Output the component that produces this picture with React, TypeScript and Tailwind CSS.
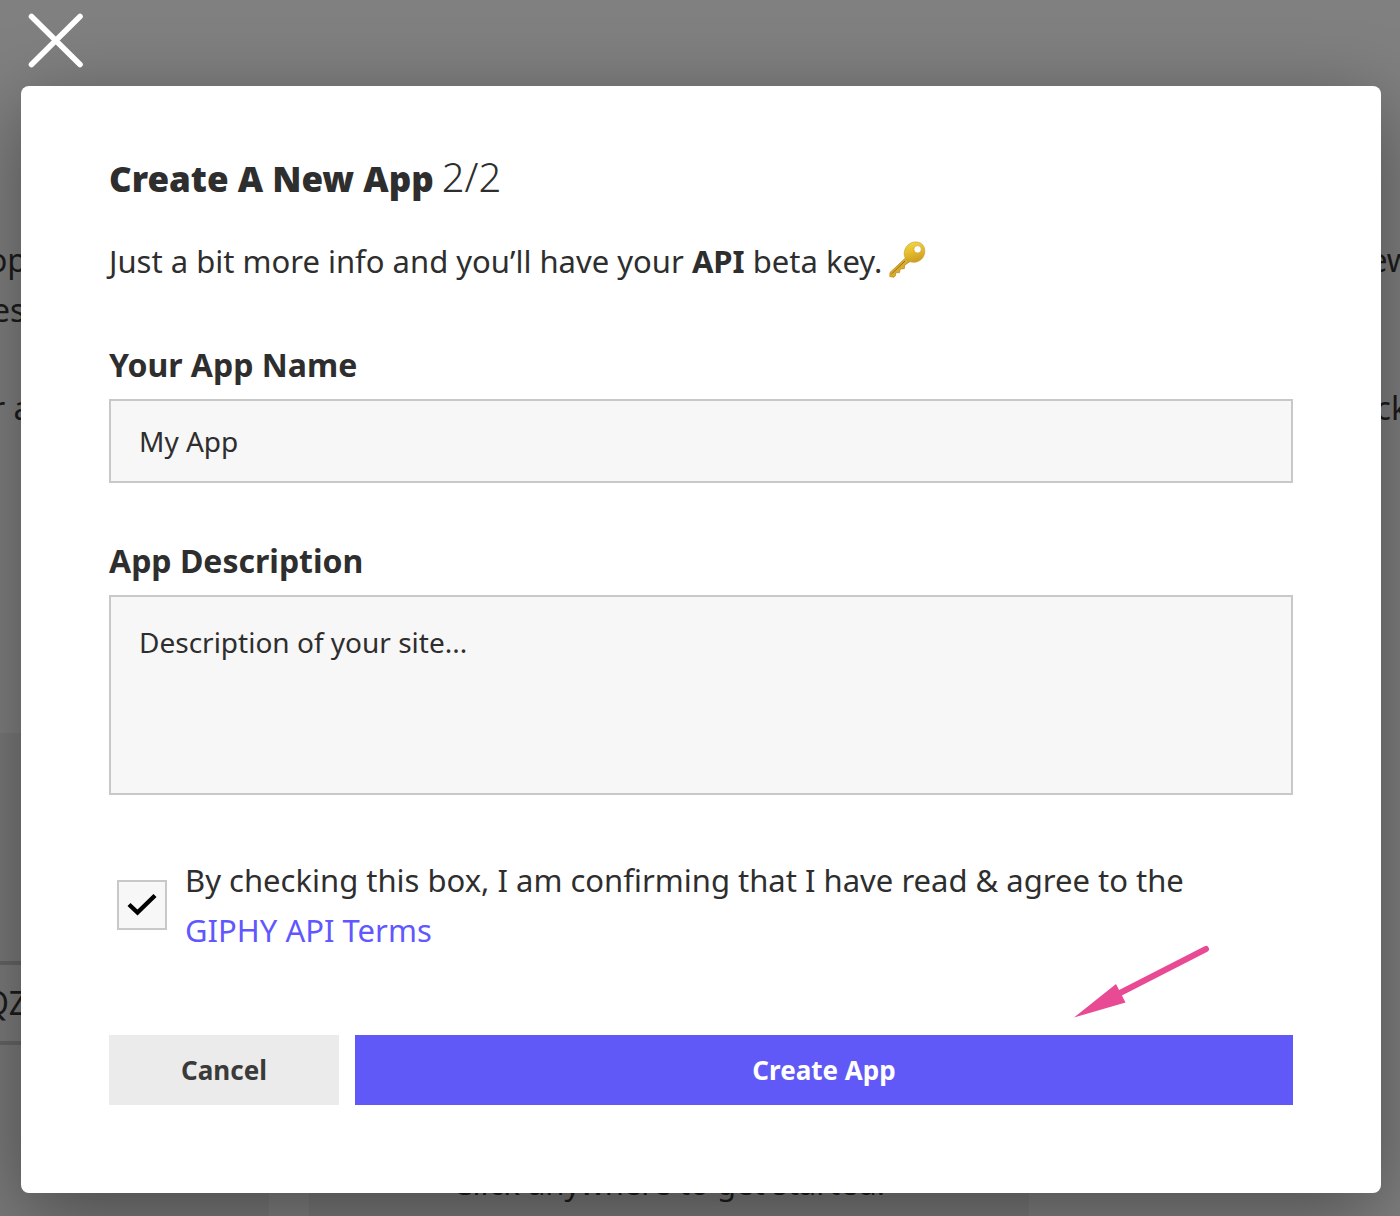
import React, { useState } from "react";

function CloseIcon() {
  return (
    <svg viewBox="0 0 56 56" className="h-14 w-14" fill="none" stroke="#ffffff" strokeWidth="5.600" strokeLinecap="round" aria-hidden="true">
      <path d="M3.500 4.500 52 52.500M52 4.500 3.500 52.500" />
    </svg>
  );
}

function KeyIcon() {
  return (
    <svg viewBox="0 0 38 38" className="mb-1 h-[38px] w-[38px] shrink-0" role="img" aria-label="key">
      <defs>
        <linearGradient id="keyGold" x1="0" y1="0" x2="0.3" y2="1">
          <stop offset="0" stopColor="#f4d94a" />
          <stop offset="0.5" stopColor="#e6c02f" />
          <stop offset="1" stopColor="#cfa023" />
        </linearGradient>
      </defs>
      <path d="M17.500 18 2 32.500 1.800 36.500 6 37.200 7.500 35.500 7.600 32.800 11.500 32.600 12.200 29 16.300 28.600 16.600 25.200 22 21.500Z" fill="#d9ad2e" stroke="#b98a1f" strokeWidth="0.8" />
      <path d="M17 21 3.500 34" stroke="#9a7018" strokeWidth="1" />
      <path fillRule="evenodd" d="M26.500 2C33 1.300 37 5.500 36.800 11.500 36.500 18.500 31 22.600 25 22.300 19 22 15.400 17.500 16.300 12 17.200 6.500 21.500 2.500 26.500 2ZM29.600 5.600A3.700 3.700 0 1 0 29.600 13 3.700 3.700 0 1 0 29.600 5.600Z" fill="url(#keyGold)" stroke="#c69a26" strokeWidth="0.6" />
    </svg>
  );
}

function Arrow() {
  return (
    <svg viewBox="0 0 136 74" className="pointer-events-none absolute right-0 bottom-full mr-[83px] mb-[17px] h-[74px] w-[136px]" aria-hidden="true">
      <path d="M132 5 46 49" stroke="#e94a94" strokeWidth="6" strokeLinecap="round" />
      <path d="M0 73.500 42 40 51.500 58.500Z" fill="#e94a94" />
    </svg>
  );
}

function PageBehind() {
  return (
    <div aria-hidden="true" className="absolute inset-0 flex flex-col overflow-hidden bg-[#808080] text-[32px] leading-[50px] text-[#1c1c1c]">
      <div className="-mx-3 mt-[235px] flex justify-between">
        <span>op</span>
        <span>new</span>
      </div>
      <div className="-ml-2">es</div>
      <div className="-mx-2 mt-12 flex justify-between">
        <span>r a</span>
        <span>ck</span>
      </div>
      <div className="mt-[300px] mr-10 h-[228px] shrink-0 bg-[#7a7a7a]" />
      <div className="mr-10 flex h-[84px] shrink-0 items-center border-y-4 border-[#666666] bg-[#7c7c7c]">
        <span className="-ml-4">QZ</span>
      </div>
      <div className="flex grow gap-10">
        <div className="w-[269px] bg-[#7a7a7a]" />
        <div className="flex w-[720px] justify-center overflow-hidden bg-[#7a7a7a]">
          <span className="mt-[113px] text-[31px] whitespace-nowrap">Click anywhere to get started!</span>
        </div>
      </div>
    </div>
  );
}

export default function App() {
  const [checked, setChecked] = useState(true);
  return (
    <div className="relative min-h-screen overflow-hidden font-['Noto_Sans','Open_Sans',sans-serif] text-[#2e2e2e]">
      <PageBehind />
      <div className="relative pr-[19px] pb-[23px] pl-[21px]">
        <div className="flex h-[86px] items-start pt-3 pl-[7px]">
          <button type="button" aria-label="Close">
            <CloseIcon />
          </button>
        </div>
        <form
          role="dialog"
          aria-labelledby="dialog-title"
          onSubmit={(e) => e.preventDefault()}
          className="flex flex-col rounded-lg bg-white px-[88px] pt-[66px] pb-[88px] shadow-[0_20px_80px_rgba(0,0,0,0.4)]"
        >
          <h1 id="dialog-title" className="flex items-baseline gap-2 text-[35px] leading-[50px] font-black">
            <span>Create A New App</span>
            <span className="text-[40px] font-light">2/2</span>
          </h1>
          <p className="mt-8 flex items-center gap-1.5 text-[31px] leading-[50px]">
            <span>
              Just a bit more info and you’ll have your <b>API</b> beta key.
            </span>
            <KeyIcon />
          </p>
          <label htmlFor="app-name" className="mt-[54px] text-[32px] leading-[50px] font-bold">
            Your App Name
          </label>
          <input
            id="app-name"
            type="text"
            defaultValue="My App"
            className="mt-[9px] h-[84px] w-full border-2 border-[#c8c8c8] bg-[#f7f7f7] px-7 text-[28px] outline-none"
          />
          <label htmlFor="app-description" className="mt-[53px] text-[32px] leading-[50px] font-bold">
            App Description
          </label>
          <textarea
            id="app-description"
            defaultValue="Description of your site..."
            className="mt-[9px] block h-[200px] w-full resize-none border-2 border-[#c8c8c8] bg-[#f7f7f7] px-7 py-5 text-[28px] leading-[50px] outline-none"
          />
          <div className="mt-[60px] flex items-center pl-2">
            <span className="relative flex h-[50px] w-[50px] shrink-0">
              <input
                id="terms"
                type="checkbox"
                checked={checked}
                onChange={(e) => setChecked(e.target.checked)}
                className="h-full w-full appearance-none border-2 border-[#c8c8c8] bg-[#f7f7f7]"
              />
              {checked && (
                <svg viewBox="0 0 50 50" className="pointer-events-none absolute inset-0" fill="none" stroke="#000000" strokeWidth="4.400" aria-hidden="true">
                  <path d="M12 24.500 20.500 32.500 38 15.500" />
                </svg>
              )}
            </span>
            <label htmlFor="terms" className="ml-[18px] text-[31px] leading-[50px]">
              By checking this box, I am confirming that I have read &amp; agree to the
              <br />
              <a href="#terms" className="text-[#6157ff]">
                GIPHY API Terms
              </a>
            </label>
          </div>
          <div className="relative mt-20 flex h-[70px] gap-4 text-[26px] font-bold">
            <Arrow />
            <button type="button" className="w-[230px] bg-[#ebebeb] text-[#3a3a3a]">
              Cancel
            </button>
            <button type="submit" className="grow bg-[#6059f7] text-white">
              Create App
            </button>
          </div>
        </form>
      </div>
    </div>
  );
}
